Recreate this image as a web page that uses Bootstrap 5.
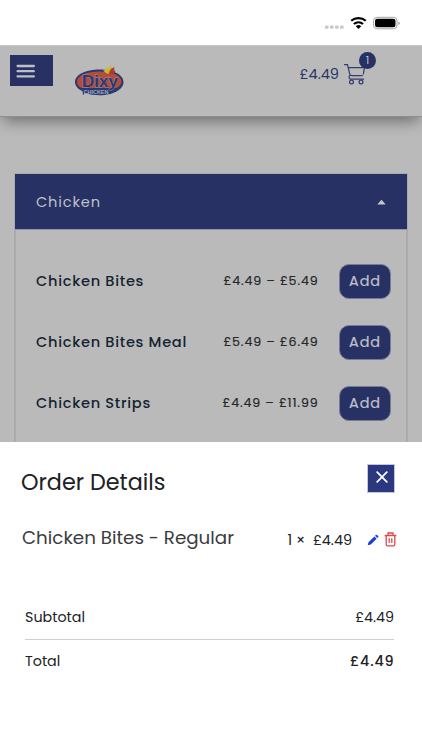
<!DOCTYPE html>
<html lang="en">
<head>
<meta charset="utf-8">
<meta name="viewport" content="width=device-width, initial-scale=1">
<title>Dixy Chicken – Order Details</title>
<link href="https://cdn.jsdelivr.net/npm/bootstrap@5.3.0/dist/css/bootstrap.min.css" rel="stylesheet">
<style>
  body { font-family: Poppins, Inter, "Open Sans", sans-serif; background: #fff; height: 750px; overflow: hidden; color: #202124; line-height: 1.2; }
  .status-strip { height: 45px; padding: 15px 22px 0 0; }
  .page-view { height: 397px; background: #bababa; overflow: hidden; }
  .site-head { height: 72px; background: #bababa; border-top: 1px solid #c4c4c4; border-bottom: 1px solid #8e8e8e; box-shadow: 0 7px 14px -3px rgba(0,0,0,.42); padding: 9px 54px 0 10px; }
  .menu-btn { width: 43px; height: 31px; background: #283163; border-radius: 0; border: 0; padding: 0 0 0 6px; }
  .brand-mark { margin: 8px 0 0 21px; }
  .cart-link { color: #2b3468; margin-top: 8px; font-size: 14.5px; }
  .cart-sum { padding-top: 2px; }
  .cart-count { width: 17px; height: 17px; left: 16px; top: -11px; background: #283163; color: #bdbfcb; font-size: 11px; }
  .menu-panel { margin: 56px 14px 0; border: 2px solid #aaabac; border-bottom: 0; border-top-width: 1px; height: 300px; }
  .menu-title { height: 56px; background: #283163; color: #bfc0cb; padding: 0 21px; font-size: 14.6px; border-bottom: 1px solid #9296ad; margin: 0 -1px 0 -1px;}
  .menu-title span { letter-spacing: .85px; padding-top: 2px; }
  .menu-rows { padding-top: 21px; }
  .menu-row { height: 61px; padding: 0 15px 0 20px; }
  .dish { color: #142331; font-size: 14.6px; font-weight: 500; letter-spacing: .7px; padding-top: 1px; }
  .cost { color: #25272a; font-size: 12.6px; font-weight: 400; letter-spacing: .87px; -webkit-text-stroke: .2px #25272a; margin-right: 20.500px; padding-bottom: 1px; }
  .add-btn { width: 52px; height: 35px; border-radius: 10px; background: #283163; border: 1px solid #777b96; color: #bfc0cb; font-size: 14.4px; font-weight: 400; letter-spacing: .9px; -webkit-text-stroke: .2px #bfc0cb; padding: 0; }
  .order-sheet { height: 308px; padding: 22px 24px 0 21px; }
  .sheet-title { font-size: 22.3px; font-weight: 400; padding-top: 6px; }
  .close-btn { width: 28px; height: 29px; background: #2b387f; border: 1px solid #c3c6dc; border-radius: 0; padding: 0 0 3px 1px; margin-right: 3px; }
  .line-item { height: 30px; margin-top: 28px; }
  .item-name { font-size: 18.3px; color: #3b3b3d; padding: 0 0 4px 1px; }
  .item-cost { font-size: 14.4px; padding-top: 2px; }
  .edit-icon { margin-left: 15px; }
  .bin-icon { margin: 0 1px 1px 5px; }
  .sums { font-size: 14.3px; margin: 41px 4px 0 4px; }
  .sum-row { height: 43px; }
  .sum-row + .sum-row { height: 45px; border-top: 1px solid #cfcfcf; }
  .sum-total { font-weight: 500; letter-spacing: .85px; margin-right: -.5px; }
</style>
<script src="https://cdn.jsdelivr.net/npm/bootstrap@5.3.0/dist/js/bootstrap.bundle.min.js"></script>
</head>
<body>
<div class="status-strip d-flex justify-content-end align-items-start">
  <svg width="78" height="18" viewBox="0 0 78 18">
    <g fill="#c8c8ca"><rect x="3" y="10.500" width="3.600" height="3.200" rx="1"/><rect x="8" y="10.500" width="3.600" height="3.200" rx="1"/><rect x="13" y="10.500" width="3.600" height="3.200" rx="1"/><rect x="18" y="10.500" width="3.600" height="3.200" rx="1"/></g>
    <g fill="none" stroke="#000" stroke-width="2.200"><path d="M29.200 5.800a11 11 0 0 1 14.600 0"/><path d="M31.900 9a7 7 0 0 1 9.200 0"/></g>
    <path d="M33.800 11.200a4 4 0 0 1 5.400 0L36.500 14z"/>
    <rect x="51.500" y="2.300" width="23.500" height="11.500" rx="3.600" fill="none" stroke="#a5a5a5"/>
    <rect x="53" y="3.800" width="20.500" height="8.500" rx="2.300"/>
    <path d="M76.300 6.500q1.500 .5 1.500 1.800t-1.500 1.800z" fill="#a5a5a5"/>
  </svg>
</div>

<div class="page-view">
  <header class="site-head d-flex align-items-start">
    <button class="btn menu-btn d-flex align-items-center" aria-label="Menu">
      <svg width="19" height="14" viewBox="0 0 19 14" stroke="#bdbfca" stroke-width="2.300" stroke-linecap="round"><path d="M1.600 2h16.200M1.600 7.200h16.200M1.600 12.400h16.200"/></svg>
    </button>
    <svg class="brand-mark" width="51" height="34" viewBox="0 0 51 34" font-family="'Liberation Sans', sans-serif" font-weight="700" text-anchor="middle">
      <path d="M25.300 6.500C39 6.500 49.500 11.500 49.500 19S39 32.200 26 32.200q-9 0-15-2.500l-2 2.500-.500-4C4 26 1 23 1 19 1 11.500 12 6.500 25.300 6.500z" fill="#2a3970"/>
      <path d="M25.300 8.500C38 8.500 47.500 12.500 47.500 18.500c0 3-2 5-5 6.500H8C4.500 24 3 22 3 18.500 3 12.500 13 8.500 25.300 8.500z" fill="#b84a38"/>
      <text x="26" y="23.500" font-size="17" textLength="36" lengthAdjust="spacingAndGlyphs" fill="#29396f" stroke="#8f93ac" stroke-width=".8" paint-order="stroke">Dixy</text>
      <text x="22" y="30.500" font-size="4.600" textLength="25" lengthAdjust="spacingAndGlyphs" fill="#a0a9c0">CHICKEN</text>
      <path d="M29 7.500l4-1-2-3 4 2 1-4 2 4 2-.5-1 3 1 2-4-1-2 2-2-1z" fill="#c5bb32"/>
      <path d="M35.500 8l2-2.500 3-1.500-.5 3 1.500 1-3 3.500-3-.5z" fill="#b33b2e"/>
    </svg>
    <a href="#" class="cart-link d-flex align-items-center text-decoration-none ms-auto">
      <span class="cart-sum">£4.49</span>
      <span class="position-relative ms-1 d-flex">
        <svg width="25" height="22" viewBox="0 0 25 22" fill="none" stroke="#343d70" stroke-width="1.250"><path d="M1 1.500h3.500l2.200 9.300q.3 1.700 2 1.700h11M5 4.500h16.500L20.300 11.500M6.500 12.500q-1 3.500 1 3.500H21"/><circle cx="8.500" cy="19" r="1.900"/><circle cx="18" cy="19" r="1.900"/></svg>
        <span class="cart-count position-absolute rounded-circle d-flex align-items-center justify-content-center">1</span>
      </span>
    </a>
  </header>

  <section class="menu-panel">
    <div class="menu-title d-flex align-items-center justify-content-between">
      <span>Chicken</span>
      <svg width="9" height="6" viewBox="0 0 9 6" fill="#c4c5ce"><path d="M.3 5.500L4.500 .8l4.200 4.700z"/></svg>
    </div>
    <div class="menu-rows">
      <div class="menu-row d-flex align-items-center"><span class="dish">Chicken Bites</span><span class="cost ms-auto">£4.49 – £5.49</span><button class="btn add-btn">Add</button></div>
      <div class="menu-row d-flex align-items-center"><span class="dish">Chicken Bites Meal</span><span class="cost ms-auto">£5.49 – £6.49</span><button class="btn add-btn">Add</button></div>
      <div class="menu-row d-flex align-items-center"><span class="dish">Chicken Strips</span><span class="cost ms-auto">£4.49 – £11.99</span><button class="btn add-btn">Add</button></div>
    </div>
  </section>
</div>

<section class="order-sheet">
  <div class="d-flex justify-content-between align-items-start">
    <h1 class="sheet-title mb-0">Order Details</h1>
    <button class="btn close-btn d-flex align-items-center justify-content-center" aria-label="Close">
      <svg width="12" height="12" viewBox="0 0 12 12" stroke="#fff" stroke-width="1.800" stroke-linecap="round"><path d="M1.200 1.200l9.600 9.600M10.800 1.200l-9.600 9.600"/></svg>
    </button>
  </div>
  <div class="line-item d-flex align-items-center">
    <span class="item-name">Chicken Bites - Regular</span>
    <span class="item-cost ms-auto">1 ×&nbsp; £4.49</span>
    <svg class="edit-icon" width="12" height="12" viewBox="0 0 13 13" fill="#1a3fdc"><path d="M.8 12.300l.8-3.300L8 2.600l2.500 2.500-6.400 6.400zM8.700 1.900l.9-.9q.6-.5 1.200 0l1.300 1.300q.5.600 0 1.200l-.9.900z"/></svg>
    <svg class="bin-icon" width="13" height="15" viewBox="0 0 13 15" fill="none" stroke="#e0484a" stroke-width="1.300"><path d="M.7 3.500h11.600M4 3.300V1h5v2.300M2.200 3.700v8.800q0 1.300 1.300 1.300h6q1.300 0 1.300-1.300V3.700M5.200 6.300v4.800M7.800 6.300v4.800"/></svg>
  </div>
  <div class="sums">
    <div class="sum-row d-flex align-items-center justify-content-between"><span>Subtotal</span><span>£4.49</span></div>
    <div class="sum-row d-flex align-items-center justify-content-between"><span>Total</span><span class="sum-total">£4.49</span></div>
  </div>
</section>
</body>
</html>
